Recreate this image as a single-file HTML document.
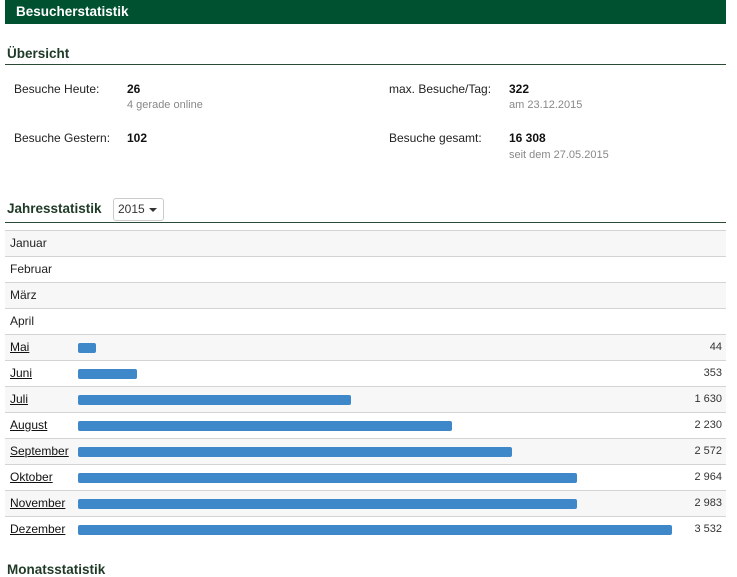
<!DOCTYPE html>
<html><head><meta charset="utf-8"><style>
body{margin:0;width:737px;height:570px;overflow:hidden;background:#fff;font-family:"Liberation Sans",Arial,sans-serif;color:#222;position:relative}
.a{position:absolute;white-space:nowrap}
.hdr{left:5px;top:0;width:721px;height:24px;background:#00512f}
.h{font-weight:bold;font-size:13.5px;color:#1f3a27}
.line{position:absolute;left:5px;width:721px;height:1px;background:#2a4a35}
.lab{font-size:12px;color:#222}
.val{font-size:12px;font-weight:bold;color:#111}
.sub{font-size:11px;color:#888}
.row{position:absolute;left:5px;width:721px;height:25px;border-top:1px solid #d4d4d4}
.row.o{background:#f7f7f7}
.row span.m{position:absolute;left:5px;top:5px;font-size:12px;color:#222}
.row a{color:#111;text-decoration:underline}
.bar{position:absolute;left:73px;top:8px;height:10px;background:#3e87c8;border-radius:2px}
.n{position:absolute;right:4px;top:6px;font-size:11px;color:#333}
</style></head><body>
<div class="a hdr"></div>
<div class="a" style="left:16px;top:4px;font-size:13.5px;font-weight:bold;color:#fff">Besucherstatistik</div>
<div class="a h" style="left:7px;top:46px">Übersicht</div>
<div class="line" style="top:64px"></div>
<div class="a lab" style="left:14px;top:82px">Besuche Heute:</div>
<div class="a val" style="left:127px;top:82px">26</div>
<div class="a sub" style="left:127px;top:99px">4 gerade online</div>
<div class="a lab" style="left:14px;top:131px">Besuche Gestern:</div>
<div class="a val" style="left:127px;top:131px">102</div>
<div class="a lab" style="left:389px;top:82px">max. Besuche/Tag:</div>
<div class="a val" style="left:509px;top:82px">322</div>
<div class="a sub" style="left:509px;top:99px">am 23.12.2015</div>
<div class="a lab" style="left:389px;top:131px">Besuche gesamt:</div>
<div class="a val" style="left:509px;top:131px">16 308</div>
<div class="a sub" style="left:509px;top:149px">seit dem 27.05.2015</div>
<div class="a h" style="left:7px;top:201px">Jahresstatistik</div>
<div class="a" style="left:113px;top:198px;width:49px;height:21px;border:1px solid #ccc;border-radius:3px;font-size:12px;line-height:21px;text-indent:4px;color:#333">2015 <span style="display:inline-block;width:0;height:0;border-left:4px solid transparent;border-right:4px solid transparent;border-top:4px solid #333;vertical-align:middle;margin-left:1px"></span></div>
<div class="line" style="top:222px"></div>

<div class="row o" style="top:230px"><span class="m">Januar</span></div>
<div class="row" style="top:256px"><span class="m">Februar</span></div>
<div class="row o" style="top:282px"><span class="m">März</span></div>
<div class="row" style="top:308px"><span class="m">April</span></div>
<div class="row o" style="top:334px"><span class="m"><a>Mai</a></span><div class="bar" style="width:18px"></div><span class="n">44</span></div>
<div class="row" style="top:360px"><span class="m"><a>Juni</a></span><div class="bar" style="width:59px"></div><span class="n">353</span></div>
<div class="row o" style="top:386px"><span class="m"><a>Juli</a></span><div class="bar" style="width:273px"></div><span class="n">1 630</span></div>
<div class="row" style="top:412px"><span class="m"><a>August</a></span><div class="bar" style="width:374px"></div><span class="n">2 230</span></div>
<div class="row o" style="top:438px"><span class="m"><a>September</a></span><div class="bar" style="width:434px"></div><span class="n">2 572</span></div>
<div class="row" style="top:464px"><span class="m"><a>Oktober</a></span><div class="bar" style="width:499px"></div><span class="n">2 964</span></div>
<div class="row o" style="top:490px"><span class="m"><a>November</a></span><div class="bar" style="width:499px"></div><span class="n">2 983</span></div>
<div class="row" style="top:516px"><span class="m"><a>Dezember</a></span><div class="bar" style="width:594px"></div><span class="n">3 532</span></div>
<div class="a h" style="left:7px;top:562px">Monatsstatistik</div>
</body></html>
